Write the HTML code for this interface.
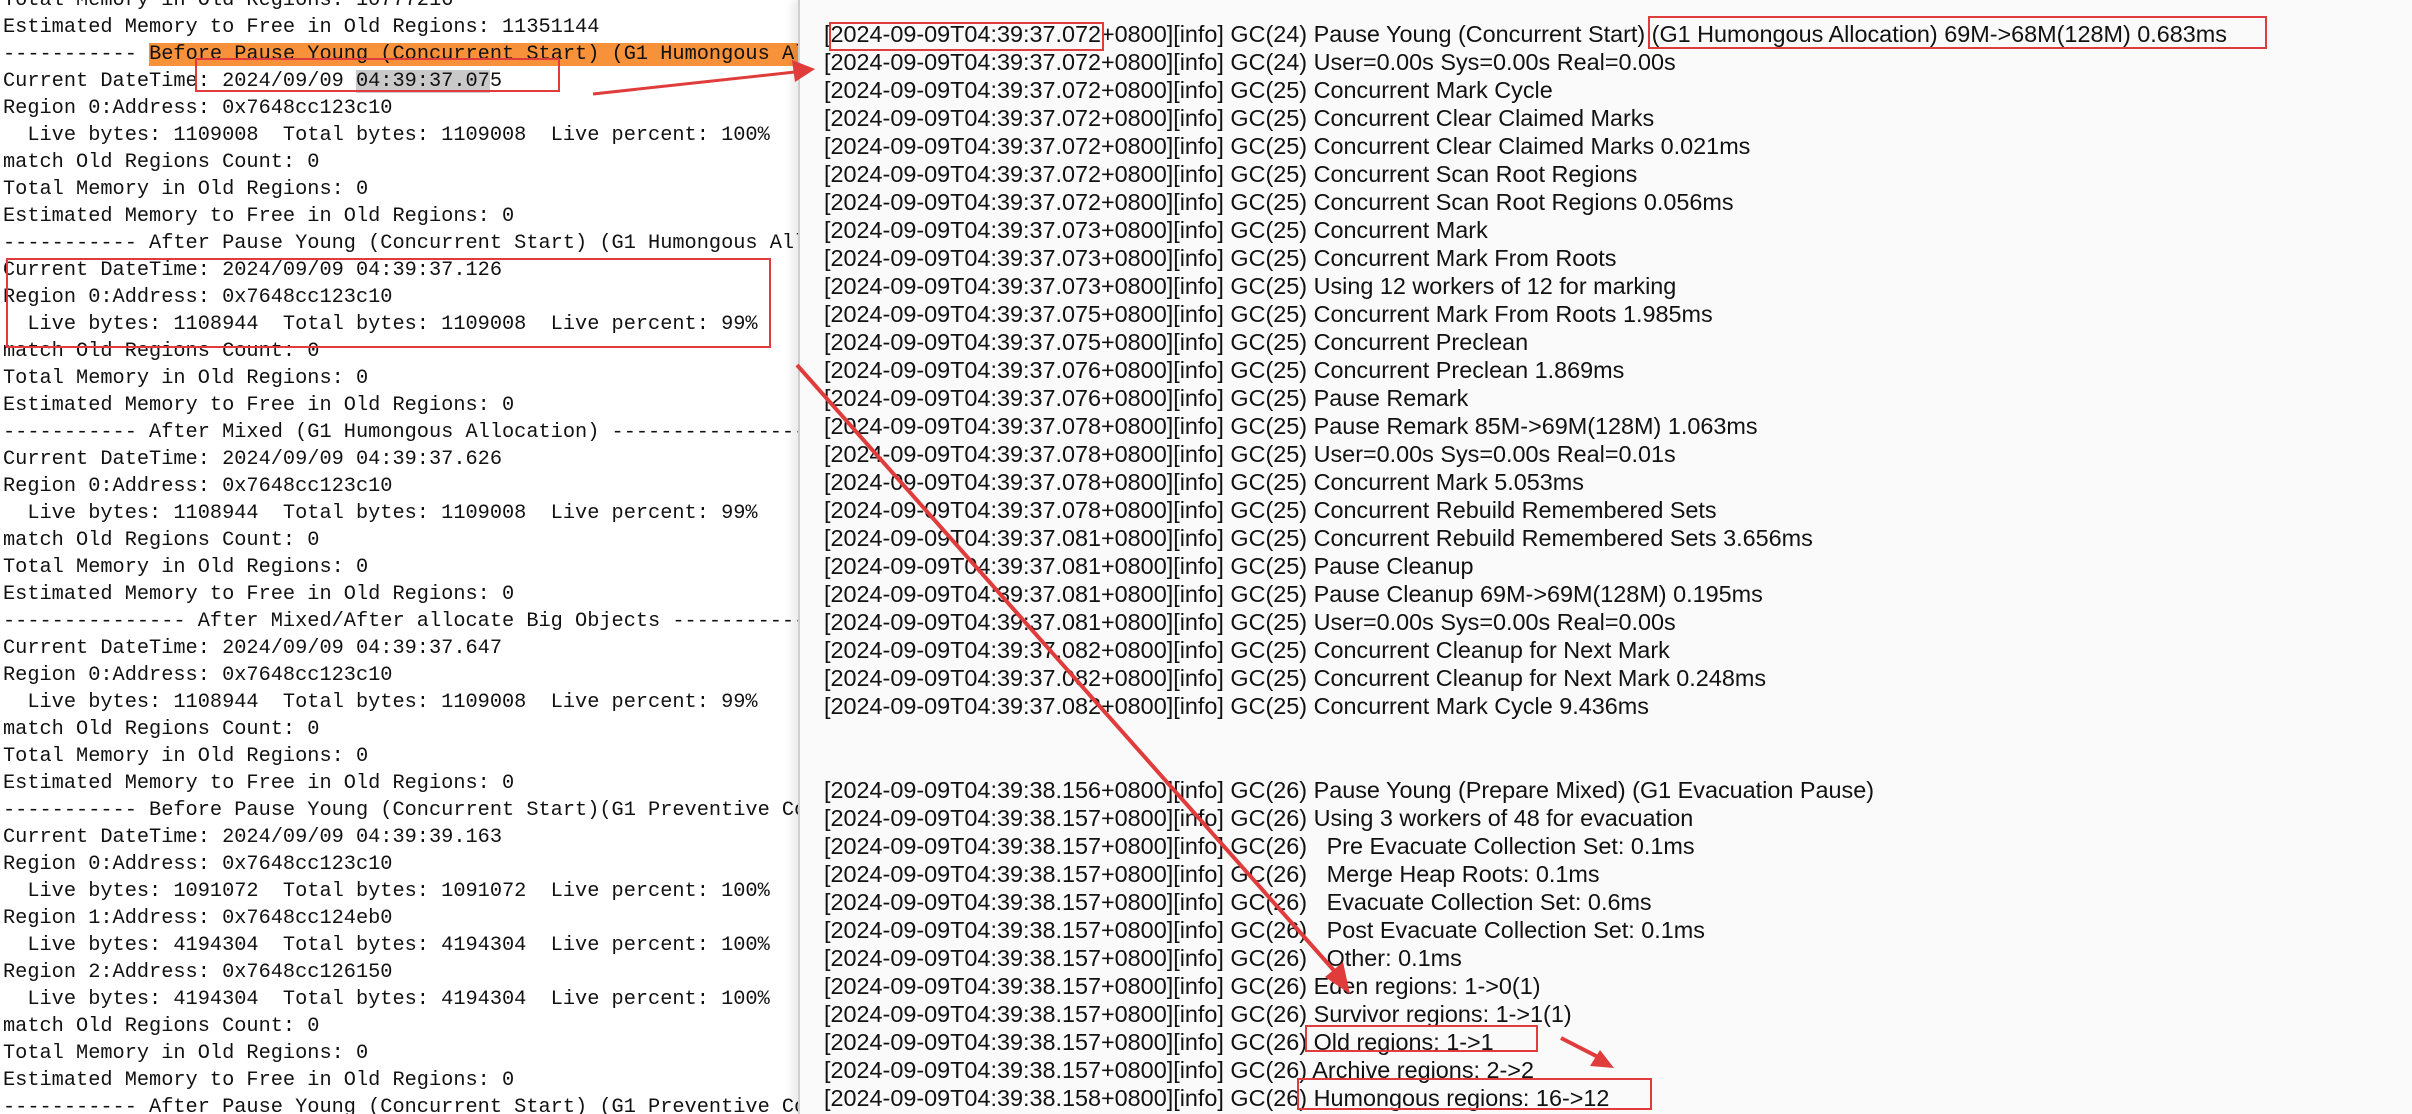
<!DOCTYPE html>
<html><head><meta charset="utf-8"><style>
html,body{margin:0;padding:0;width:2412px;height:1114px;overflow:hidden;background:#fff;position:relative}
#left{position:absolute;left:0;top:0;width:798px;height:1114px;overflow:hidden;background:#fff}
#left pre{position:absolute;left:3px;top:-13.5px;margin:0;font-family:"Liberation Mono",monospace;font-size:20.3px;line-height:27px;color:#111;white-space:pre}
#right{position:absolute;left:798px;top:0;width:1614px;height:1114px;background:#fafafa;border-left:2px solid #cfcfcf;box-shadow:-6px 0 8px rgba(0,0,0,0.08)}
#right pre{position:absolute;left:24px;top:19.5px;margin:0;font-family:"Liberation Sans",sans-serif;font-size:23.4px;line-height:28px;color:#111;white-space:pre}
.or{background:#f7923a}
.gr{background:#c9c9c9}
.box{position:absolute;border:2.5px solid #e03c3c;box-sizing:border-box}
svg{position:absolute;left:0;top:0}
</style></head><body>
<div id="left"><pre>Total Memory in Old Regions: 10777216
Estimated Memory to Free in Old Regions: 11351144
----------- <span class="or">Before Pause Young (Concurrent Start) (G1 Humongous Allocation)      </span>
Current DateTime: 2024/09/09 <span class="gr">04:39:37.07</span>5
Region 0:Address: 0x7648cc123c10
  Live bytes: 1109008  Total bytes: 1109008  Live percent: 100%
match Old Regions Count: 0
Total Memory in Old Regions: 0
Estimated Memory to Free in Old Regions: 0
----------- After Pause Young (Concurrent Start) (G1 Humongous Allocation)
Current DateTime: 2024/09/09 04:39:37.126
Region 0:Address: 0x7648cc123c10
  Live bytes: 1108944  Total bytes: 1109008  Live percent: 99%
match Old Regions Count: 0
Total Memory in Old Regions: 0
Estimated Memory to Free in Old Regions: 0
----------- After Mixed (G1 Humongous Allocation) -----------------------
Current DateTime: 2024/09/09 04:39:37.626
Region 0:Address: 0x7648cc123c10
  Live bytes: 1108944  Total bytes: 1109008  Live percent: 99%
match Old Regions Count: 0
Total Memory in Old Regions: 0
Estimated Memory to Free in Old Regions: 0
--------------- After Mixed/After allocate Big Objects ---------------------
Current DateTime: 2024/09/09 04:39:37.647
Region 0:Address: 0x7648cc123c10
  Live bytes: 1108944  Total bytes: 1109008  Live percent: 99%
match Old Regions Count: 0
Total Memory in Old Regions: 0
Estimated Memory to Free in Old Regions: 0
----------- Before Pause Young (Concurrent Start)(G1 Preventive Collection)
Current DateTime: 2024/09/09 04:39:39.163
Region 0:Address: 0x7648cc123c10
  Live bytes: 1091072  Total bytes: 1091072  Live percent: 100%
Region 1:Address: 0x7648cc124eb0
  Live bytes: 4194304  Total bytes: 4194304  Live percent: 100%
Region 2:Address: 0x7648cc126150
  Live bytes: 4194304  Total bytes: 4194304  Live percent: 100%
match Old Regions Count: 0
Total Memory in Old Regions: 0
Estimated Memory to Free in Old Regions: 0
----------- After Pause Young (Concurrent Start) (G1 Preventive Collection)</pre></div>
<div id="right"><pre>[2024-09-09T04:39:37.072+0800][info] GC(24) Pause Young (Concurrent Start) (G1 Humongous Allocation) 69M-&gt;68M(128M) 0.683ms
[2024-09-09T04:39:37.072+0800][info] GC(24) User=0.00s Sys=0.00s Real=0.00s
[2024-09-09T04:39:37.072+0800][info] GC(25) Concurrent Mark Cycle
[2024-09-09T04:39:37.072+0800][info] GC(25) Concurrent Clear Claimed Marks
[2024-09-09T04:39:37.072+0800][info] GC(25) Concurrent Clear Claimed Marks 0.021ms
[2024-09-09T04:39:37.072+0800][info] GC(25) Concurrent Scan Root Regions
[2024-09-09T04:39:37.072+0800][info] GC(25) Concurrent Scan Root Regions 0.056ms
[2024-09-09T04:39:37.073+0800][info] GC(25) Concurrent Mark
[2024-09-09T04:39:37.073+0800][info] GC(25) Concurrent Mark From Roots
[2024-09-09T04:39:37.073+0800][info] GC(25) Using 12 workers of 12 for marking
[2024-09-09T04:39:37.075+0800][info] GC(25) Concurrent Mark From Roots 1.985ms
[2024-09-09T04:39:37.075+0800][info] GC(25) Concurrent Preclean
[2024-09-09T04:39:37.076+0800][info] GC(25) Concurrent Preclean 1.869ms
[2024-09-09T04:39:37.076+0800][info] GC(25) Pause Remark
[2024-09-09T04:39:37.078+0800][info] GC(25) Pause Remark 85M-&gt;69M(128M) 1.063ms
[2024-09-09T04:39:37.078+0800][info] GC(25) User=0.00s Sys=0.00s Real=0.01s
[2024-09-09T04:39:37.078+0800][info] GC(25) Concurrent Mark 5.053ms
[2024-09-09T04:39:37.078+0800][info] GC(25) Concurrent Rebuild Remembered Sets
[2024-09-09T04:39:37.081+0800][info] GC(25) Concurrent Rebuild Remembered Sets 3.656ms
[2024-09-09T04:39:37.081+0800][info] GC(25) Pause Cleanup
[2024-09-09T04:39:37.081+0800][info] GC(25) Pause Cleanup 69M-&gt;69M(128M) 0.195ms
[2024-09-09T04:39:37.081+0800][info] GC(25) User=0.00s Sys=0.00s Real=0.00s
[2024-09-09T04:39:37.082+0800][info] GC(25) Concurrent Cleanup for Next Mark
[2024-09-09T04:39:37.082+0800][info] GC(25) Concurrent Cleanup for Next Mark 0.248ms
[2024-09-09T04:39:37.082+0800][info] GC(25) Concurrent Mark Cycle 9.436ms


[2024-09-09T04:39:38.156+0800][info] GC(26) Pause Young (Prepare Mixed) (G1 Evacuation Pause)
[2024-09-09T04:39:38.157+0800][info] GC(26) Using 3 workers of 48 for evacuation
[2024-09-09T04:39:38.157+0800][info] GC(26)   Pre Evacuate Collection Set: 0.1ms
[2024-09-09T04:39:38.157+0800][info] GC(26)   Merge Heap Roots: 0.1ms
[2024-09-09T04:39:38.157+0800][info] GC(26)   Evacuate Collection Set: 0.6ms
[2024-09-09T04:39:38.157+0800][info] GC(26)   Post Evacuate Collection Set: 0.1ms
[2024-09-09T04:39:38.157+0800][info] GC(26)   Other: 0.1ms
[2024-09-09T04:39:38.157+0800][info] GC(26) Eden regions: 1-&gt;0(1)
[2024-09-09T04:39:38.157+0800][info] GC(26) Survivor regions: 1-&gt;1(1)
[2024-09-09T04:39:38.157+0800][info] GC(26) Old regions: 1-&gt;1
[2024-09-09T04:39:38.157+0800][info] GC(26) Archive regions: 2-&gt;2
[2024-09-09T04:39:38.158+0800][info] GC(26) Humongous regions: 16-&gt;12</pre></div>

<div class="box" style="left:195px;top:58px;width:365px;height:34px"></div>
<div class="box" style="left:6px;top:258px;width:765px;height:90px"></div>
<div class="box" style="left:829px;top:22px;width:275px;height:29px"></div>
<div class="box" style="left:1648px;top:16px;width:619px;height:33px"></div>
<div class="box" style="left:1305px;top:1025px;width:233px;height:27px"></div>
<div class="box" style="left:1297px;top:1078px;width:355px;height:32px"></div>

<svg width="2412" height="1114" viewBox="0 0 2412 1114">
<g fill="#e03c3c" stroke="#e03c3c">
<line x1="593" y1="94" x2="795" y2="72" stroke-width="3"/>
<polygon points="815,69 792,60 795,82" stroke="none"/>
<line x1="797" y1="365" x2="1338" y2="975" stroke-width="4"/>
<polygon points="1350,994 1325,977 1343,962" stroke="none"/>
<line x1="1561" y1="1038" x2="1600" y2="1058" stroke-width="4"/>
<polygon points="1614,1068 1590,1066 1600,1050" stroke="none"/>
</g>
</svg>
</body></html>
